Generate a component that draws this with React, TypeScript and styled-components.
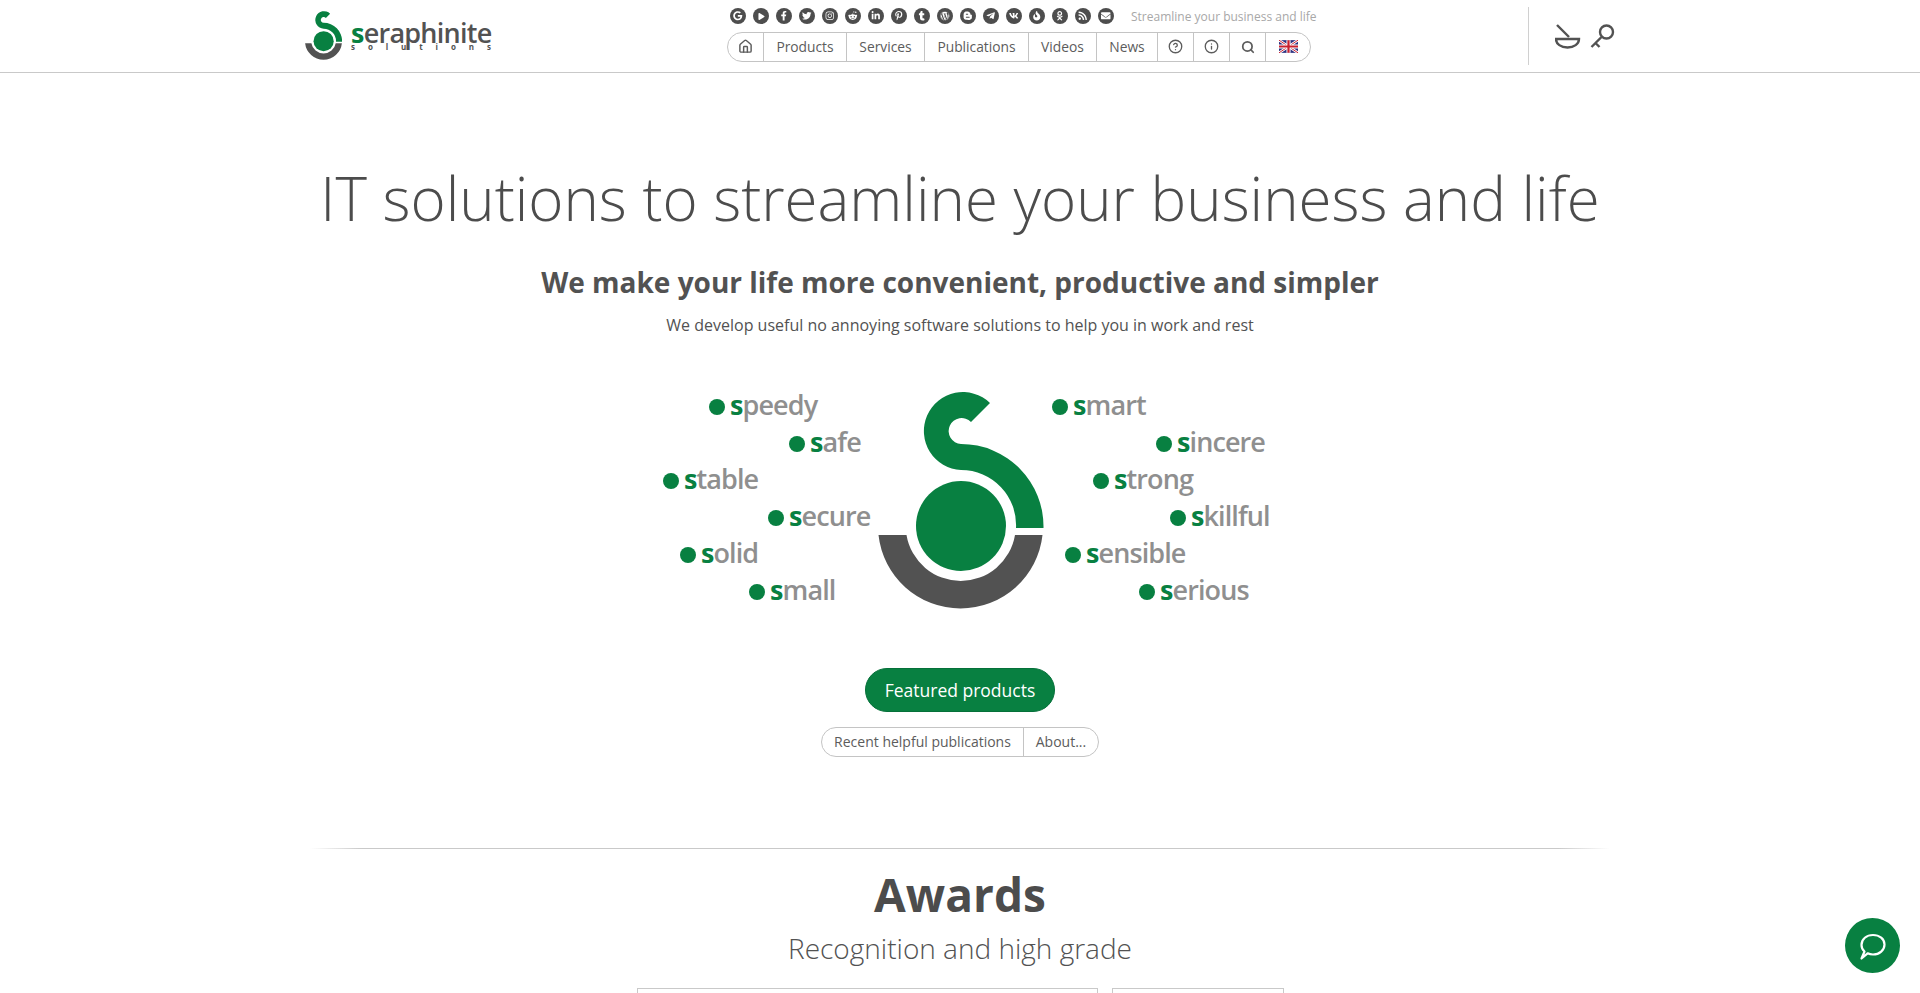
import React from "react";
import styled, { createGlobalStyle } from "styled-components";
import { FaGoogle, FaFacebookF, FaTwitter, FaInstagram, FaRedditAlien, FaLinkedinIn, FaPinterestP, FaTumblr, FaWordpress, FaBloggerB, FaTelegramPlane, FaVk, FaOdnoklassniki, FaRss, FaEnvelope, FaPlay, FaFire } from "react-icons/fa";
import { Home, CircleHelp, Info, Search } from "lucide-react";

const GREEN = "#088041";
const GRAY = "#525252";

const GlobalStyle = createGlobalStyle`
  html, body {
    margin: 0;
    padding: 0;
    height: 993px;
    overflow: hidden;
    background: #fff;
    font-family: "Open Sans", sans-serif;
    color: ${GRAY};
  }
`;

const Header = styled.header`
  height: 72px;
  border-bottom: 1px solid #c9c9c9;
  display: flex;
  padding-left: 305px;
`;
const Logo = styled.div`
  display: flex;
  align-items: flex-start;
  gap: 9px;
  width: 420px;
  padding-top: 11px;
`;
const LogoText = styled.div`
  width: 140px;
  height: 46px;
  padding-top: 12px;
  box-sizing: border-box;
`;
const LogoName = styled.div`
  font-size: 27px;
  font-weight: 600;
  line-height: 20px;
  letter-spacing: -0.75px;
  white-space: nowrap;
  color: ${GRAY};
  span {
    color: ${GREEN};
    font-weight: 700;
  }
`;
const LogoSub = styled.div`
  display: flex;
  justify-content: space-between;
  font-size: 8px;
  font-weight: 700;
  line-height: 8px;
`;
const Center = styled.div`
  width: 801px;
  padding-top: 8px;
  padding-left: 2px;
`;
const TopRow = styled.div`
  display: flex;
  align-items: center;
  height: 16px;
`;
const Socials = styled.div`
  display: flex;
  gap: 7px;
  margin-left: 3px;
`;
const Social = styled.a`
  width: 16px;
  height: 16px;
  border-radius: 50%;
  background: #4d4d4d;
  color: #fff;
  display: flex;
  align-items: center;
  justify-content: center;
  font-size: 9.5px;
`;
const Slogan = styled.span`
  margin-left: 17px;
  font-size: 12px;
  color: #a8a8a8;
`;
const Nav = styled.nav`
  display: inline-flex;
  margin-top: 8px;
  height: 28px;
  border: 1px solid #c4c4c4;
  border-radius: 15px;
`;
const NavItem = styled.a<{ $w: number }>`
  width: ${(p) => p.$w}px;
  box-sizing: border-box;
  padding-bottom: 1px;
  border-left: 1px solid #c4c4c4;
  display: flex;
  align-items: center;
  justify-content: center;
  font-size: 13.8px;
  color: #5c5c5c;
  &:first-child {
    border-left: 0;
  }
`;
const Tools = styled.div`
  margin-top: 7px;
  height: 58px;
  border-left: 1px solid #d0d0d0;
  display: flex;
  align-items: center;
  gap: 9px;
  padding-left: 26px;
`;
const Main = styled.main`
  text-align: center;
`;
const Title = styled.h1`
  margin: 0;
  padding-top: 77px;
  font-size: 60px;
  font-weight: 300;
  line-height: 96px;
  color: #4c4c4c;
`;
const Lead = styled.h2`
  margin: 14px 0 0;
  font-size: 28px;
  font-weight: 700;
  line-height: 44px;
  color: ${GRAY};
`;
const Sub = styled.p`
  margin: 8px 0 0;
  font-size: 16px;
  line-height: 26px;
  color: ${GRAY};
`;
const Diagram = styled.div`
  position: relative;
  height: 299px;
  margin-top: 31px;
`;
const BigMark = styled.svg`
  position: absolute;
  left: 878px;
  top: 23px;
`;
const Word = styled.div<{ $x: number; $y: number }>`
  position: absolute;
  left: ${(p) => p.$x - 8}px;
  top: ${(p) => p.$y}px;
  display: flex;
  align-items: center;
  gap: 5px;
  font-size: 27px;
  font-weight: 600;
  letter-spacing: -0.9px;
  line-height: 36px;
  color: #8f8f8f;
  &::before {
    content: "";
    width: 16px;
    height: 16px;
    margin-top: 3px;
    border-radius: 50%;
    background: ${GREEN};
  }
  span {
    color: ${GREEN};
    font-weight: 700;
  }
`;
const Featured = styled.a`
  display: block;
  box-sizing: border-box;
  width: 190px;
  height: 44px;
  margin: 0 auto;
  border-radius: 22px;
  background: ${GREEN};
  border: 1px solid #06703a;
  color: #fff;
  font-size: 17.5px;
  line-height: 42px;
`;
const Pills = styled.div`
  display: flex;
  width: 278px;
  height: 30px;
  box-sizing: border-box;
  margin: 15px auto 0;
  border: 1px solid #c4c4c4;
  border-radius: 15px;
`;
const Pill = styled.a<{ $w: number }>`
  width: ${(p) => p.$w}px;
  box-sizing: border-box;
  border-left: 1px solid #c4c4c4;
  font-size: 14px;
  line-height: 28px;
  color: #5c5c5c;
  &:first-child {
    border-left: 0;
  }
`;
const Rule = styled.hr`
  border: 0;
  height: 1px;
  width: 1300px;
  margin: 91px auto 0;
  background: linear-gradient(to right, transparent, #c9c9c9 4%, #c9c9c9 96%, transparent);
`;
const Awards = styled.h2`
  margin: 14px 0 0;
  font-size: 46px;
  font-weight: 700;
  line-height: 62px;
  color: #4c4c4c;
`;
const AwardsSub = styled.p`
  margin: 3px 0 0;
  font-size: 28px;
  font-weight: 300;
  line-height: 40px;
  color: ${GRAY};
`;
const Cards = styled.div`
  display: flex;
  justify-content: center;
  gap: 14px;
  margin-top: 20px;
`;
// only the top edge of each card is inside the frame
const Card = styled.div<{ $w: number }>`
  width: ${(p) => p.$w}px;
  height: 5px;
  box-sizing: border-box;
  border: 1px solid #c9c9c9;
  border-bottom: 0;
`;
const Chat = styled.button`
  position: fixed;
  left: 1845px;
  top: 918px;
  width: 55px;
  height: 55px;
  padding: 0;
  border: 0;
  border-radius: 50%;
  background: ${GREEN};
  color: #fff;
  display: flex;
  align-items: center;
  justify-content: center;
`;

// the mark is the same drawing in the header and the hero
const Mark = () => (
  <>
    <path
      fill={GREEN}
      d="M1043.5 528A82.5 82.5 0 0 0 961 444A13 13 0 1 1 971 422L990 403A39 39 0 1 0 961 470A55 55 0 0 1 1016 528Z"
    />
    <circle cx="961" cy="526" r="45" fill={GREEN} />
    <path
      fill={GRAY}
      d="M878.5 535A82.5 82.5 0 0 0 1042.5 535L1015 535A55 55 0 0 1 906.5 535Z"
    />
  </>
);

const socials = [
  <FaGoogle />, <FaPlay size={7} />, <FaFacebookF />, <FaTwitter />, <FaInstagram />, <FaRedditAlien />,
  <FaLinkedinIn />, <FaPinterestP />, <FaTumblr />, <FaWordpress />, <FaBloggerB />,
  <FaTelegramPlane />, <FaVk />, <FaFire />, <FaOdnoklassniki />, <FaRss />, <FaEnvelope />,
];

const words: [string, number, number][] = [
  ["speedy", 717, 384], ["safe", 797, 421], ["stable", 671, 458], ["secure", 776, 495],
  ["solid", 688, 532], ["small", 757, 569], ["smart", 1060, 384], ["sincere", 1164, 421],
  ["strong", 1101, 458], ["skillful", 1178, 495], ["sensible", 1073, 532], ["serious", 1147, 569],
];

const Flag = () => (
  <svg width="19" height="13" viewBox="0 0 60 40">
    <rect width="60" height="40" fill="#2b2f7f" />
    <path d="M0 0L60 40M60 0L0 40" stroke="#fff" strokeWidth="8" />
    <path d="M0 0L60 40M60 0L0 40" stroke="#c8202f" strokeWidth="3" />
    <path d="M30 0V40M0 20H60" stroke="#fff" strokeWidth="13" />
    <path d="M30 0V40M0 20H60" stroke="#c8202f" strokeWidth="7" />
  </svg>
);

const App: React.FC = () => {
  return (
    <>
      <GlobalStyle />
      <Header>
        <Logo>
          <svg width="37" height="49" viewBox="878 392 165 217">
            <Mark />
          </svg>
          <LogoText>
            <LogoName>
              <span>s</span>eraphinite
            </LogoName>
            <LogoSub>
              {"solutions".split("").map((c, i) => (
                <span key={i}>{c}</span>
              ))}
            </LogoSub>
          </LogoText>
        </Logo>
        <Center>
          <TopRow>
            <Socials>
              {socials.map((icon, i) => (
                <Social key={i}>{icon}</Social>
              ))}
            </Socials>
            <Slogan>Streamline your business and life</Slogan>
          </TopRow>
          <Nav>
            <NavItem $w={35}><Home size={15} strokeWidth={2.3} /></NavItem>
            <NavItem $w={83}>Products</NavItem>
            <NavItem $w={78}>Services</NavItem>
            <NavItem $w={104}>Publications</NavItem>
            <NavItem $w={68}>Videos</NavItem>
            <NavItem $w={61}>News</NavItem>
            <NavItem $w={36}><CircleHelp size={15} strokeWidth={2.1} /></NavItem>
            <NavItem $w={36}><Info size={15} strokeWidth={2.1} /></NavItem>
            <NavItem $w={36}><Search size={14} strokeWidth={3} /></NavItem>
            <NavItem $w={45}><Flag /></NavItem>
          </Nav>
        </Center>
        <Tools>
          <svg width="26" height="26" viewBox="0 0 26 26" fill="none" stroke="#525252" strokeWidth="2.4">
            <path d="M2 2L14 14" />
            <path d="M1 16H24C24 21 19 24.5 12.5 24.5C6 24.5 1 21 1 16Z" />
          </svg>
          <svg width="26" height="26" viewBox="0 0 26 26" fill="none" stroke="#525252" strokeWidth="2.4">
            <circle cx="16.5" cy="9" r="6.5" />
            <path d="M11.5 14L1.5 24M5.5 20L9.5 24" />
          </svg>
        </Tools>
      </Header>
      <Main>
        <Title>IT solutions to streamline your business and life</Title>
        <Lead>We make your life more convenient, productive and simpler</Lead>
        <Sub>We develop useful no annoying software solutions to help you in work and rest</Sub>
        <Diagram>
          <BigMark width="166" height="217" viewBox="878 392 166 217">
            <Mark />
          </BigMark>
          {words.map(([w, x, y]) => (
            <Word key={w} $x={x} $y={y - 366}>
              <div>
                <span>s</span>
                {w.slice(1)}
              </div>
            </Word>
          ))}
        </Diagram>
        <Featured>Featured products</Featured>
        <Pills>
          <Pill $w={201}>Recent helpful publications</Pill>
          <Pill $w={75}>About...</Pill>
        </Pills>
        <Rule />
        <Awards>Awards</Awards>
        <AwardsSub>Recognition and high grade</AwardsSub>
        <Cards>
          <Card $w={461} />
          <Card $w={172} />
        </Cards>
      </Main>
      <Chat aria-label="chat">
        <svg width="30" height="30" viewBox="0 0 30 30" fill="none" stroke="#fff" strokeWidth="2.2" strokeLinejoin="round">
          <path d="M6.5 20.5C4.4 18.7 3.5 16.3 3.5 14C3.5 8 8.5 4 15 4C21.5 4 26.5 8 26.5 13.5C26.5 19 21.5 23.5 15 23.5C13 23.5 11.2 23.1 9.6 22.3L3.5 27.5Z" />
        </svg>
      </Chat>
    </>
  );
};

export default App;
